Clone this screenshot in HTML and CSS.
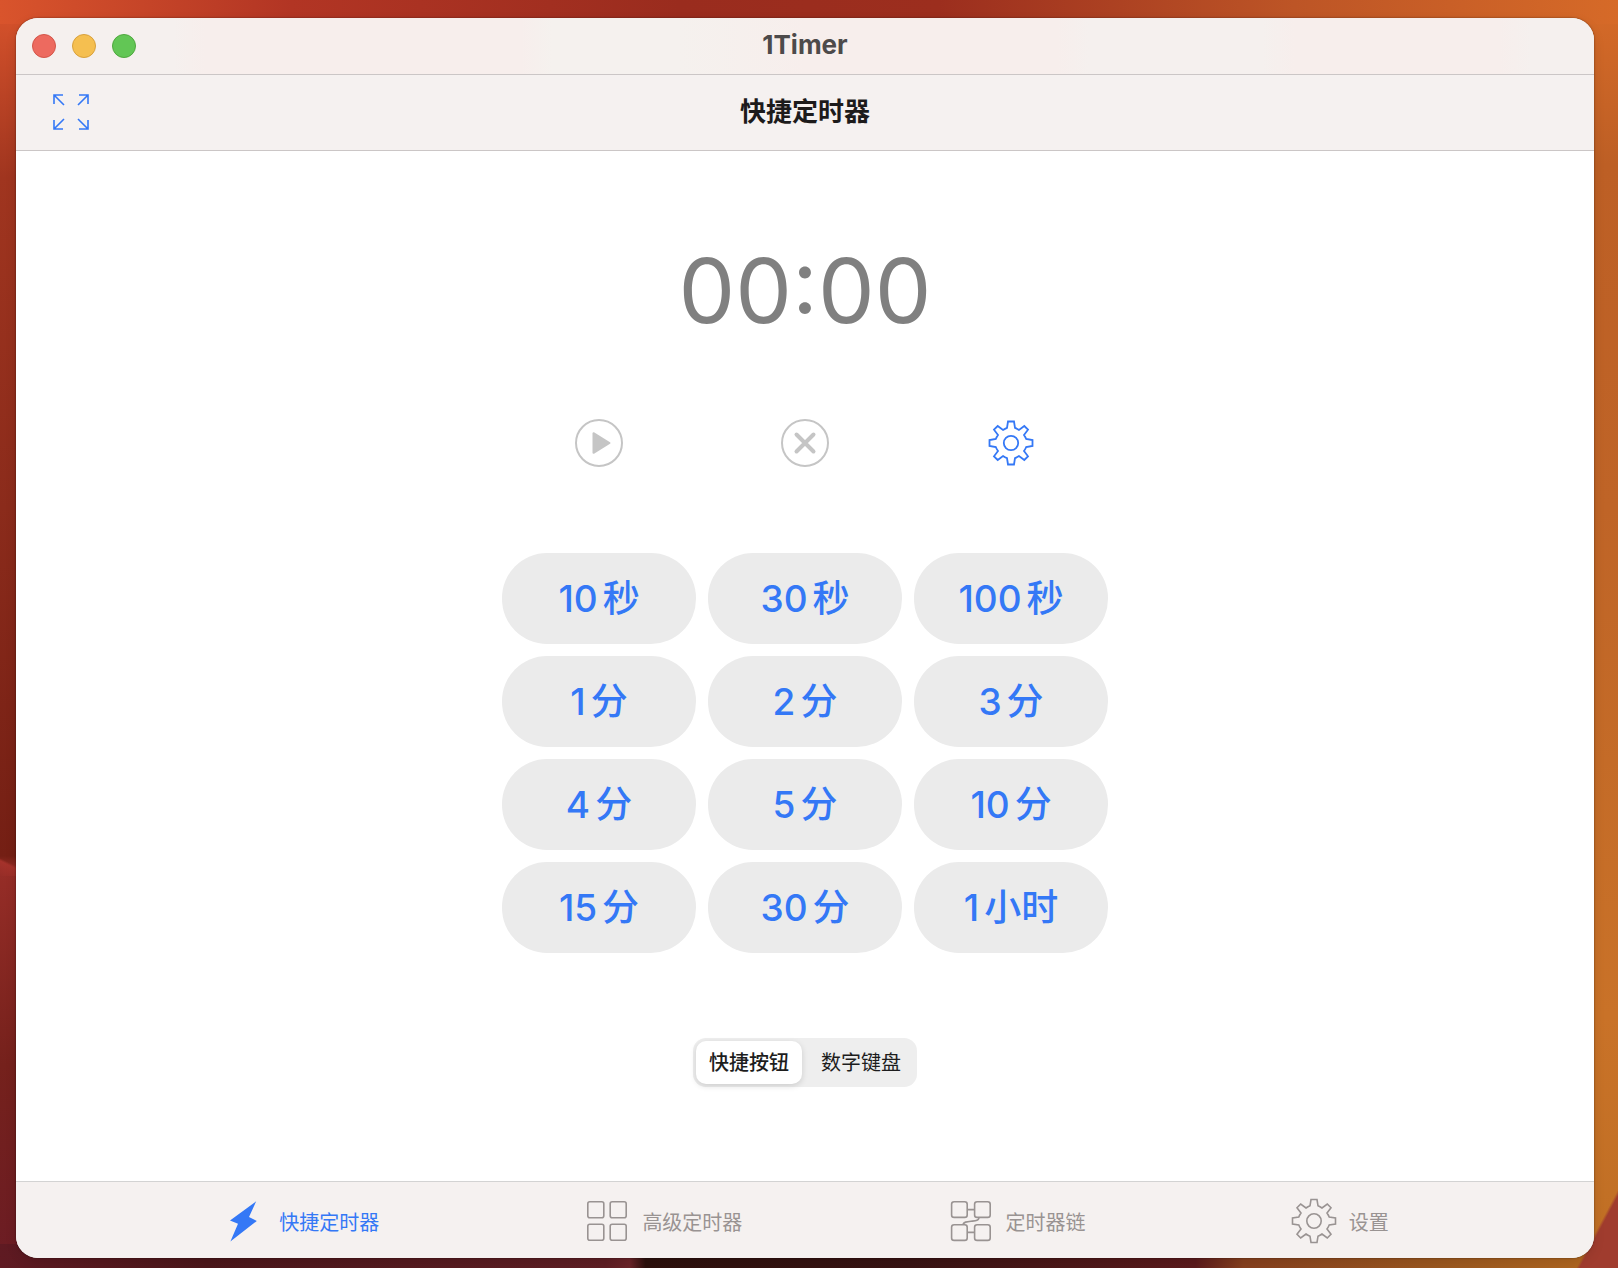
FILE: index.html
```html
<!DOCTYPE html>
<html lang="zh-CN">
<head>
  <meta charset="UTF-8">
  <meta name="viewport" content="width=device-width, initial-scale=1.0">
  <title>1Timer</title>
  <link rel="stylesheet" href="styles.css">
</head>
<body>
  <svg class="sprite" aria-hidden="true">
    <symbol id="gear" viewBox="-23 -23 46 46">
      <path d="M-3-21.5H3L4-15.2Q6-14.4 8-13L13.3-17L17-13.3L13-8Q14.4-6 15.2-4L21.5-3V3L15.2 4Q14.4 6 13 8L17 13.3L13.3 17L8 13Q6 14.4 4 15.2L3 21.5H-3L-4 15.2Q-6 14.4-8 13L-13.3 17L-17 13.3L-13 8Q-14.4 6-15.2 4L-21.5 3V-3L-15.2-4Q-14.4-6-13-8L-17-13.3L-13.3-17L-8-13Q-6-14.4-4-15.2Z"/>
      <circle r="7.2"/>
    </symbol>
  </svg>

  <div class="window">
    <header class="titlebar">
      <div class="lights">
        <button class="light red" aria-label="关闭"></button>
        <button class="light yellow" aria-label="最小化"></button>
        <button class="light green" aria-label="缩放"></button>
      </div>
      <span class="app-name">1Timer</span>
    </header>

    <div class="toolbar">
      <button class="icon-btn" aria-label="全屏">
        <svg class="expand" viewBox="0 0 36 36">
          <path d="M1 10V1H10M1 1L11 11M26 1H35V10M35 1L25 11M1 26V35H10M1 35L11 25M26 35H35V26M35 35L25 25"/>
        </svg>
      </button>
      <h1>快捷定时器</h1>
    </div>

    <main>
      <div class="time">00:00</div>

      <div class="controls">
        <button class="icon-btn" aria-label="开始" disabled>
          <svg class="icon muted" viewBox="-24 -24 48 48">
            <circle r="23"/>
            <path class="solid" d="M-5.5-9.8V9.8L10.5 0Z"/>
          </svg>
        </button>
        <button class="icon-btn" aria-label="取消" disabled>
          <svg class="icon muted" viewBox="-24 -24 48 48">
            <circle r="23"/>
            <path class="cross" d="M-8.5-8.5L8.5 8.5M8.5-8.5L-8.5 8.5"/>
          </svg>
        </button>
        <button class="icon-btn" aria-label="定时器设置">
          <svg class="gear"><use href="#gear"/></svg>
        </button>
      </div>

      <div class="presets">
        <button><span>10</span><span>秒</span></button>
        <button><span>30</span><span>秒</span></button>
        <button><span>100</span><span>秒</span></button>
        <button><span>1</span><span>分</span></button>
        <button><span>2</span><span>分</span></button>
        <button><span>3</span><span>分</span></button>
        <button><span>4</span><span>分</span></button>
        <button><span>5</span><span>分</span></button>
        <button><span>10</span><span>分</span></button>
        <button><span>15</span><span>分</span></button>
        <button><span>30</span><span>分</span></button>
        <button><span>1</span><span>小时</span></button>
      </div>

      <div class="segmented">
        <input type="radio" name="mode" id="mode-quick" checked>
        <label for="mode-quick">快捷按钮</label>
        <input type="radio" name="mode" id="mode-keypad">
        <label for="mode-keypad">数字键盘</label>
      </div>
    </main>

    <nav class="tabbar">
      <a class="tab active" href="#quick">
        <svg viewBox="-23 -23 46 46"><path class="bolt" d="M12.2-19.7L-14-.5L-6 2.7L-13.6 20.4L12.8 0L5-4Z"/></svg>
        <span>快捷定时器</span>
      </a>
      <a class="tab" href="#advanced">
        <svg viewBox="-23 -23 46 46">
          <rect x="-19.2" y="-19.2" width="16" height="16" rx="2"/>
          <rect x="3.2" y="-19.2" width="16" height="16" rx="2"/>
          <rect x="-19.2" y="3.2" width="16" height="16" rx="2"/>
          <rect x="3.2" y="3.2" width="16" height="16" rx="2"/>
        </svg>
        <span>高级定时器</span>
      </a>
      <a class="tab" href="#chain">
        <svg viewBox="-23 -23 46 46">
          <rect x="-19.4" y="-19.2" width="15.6" height="15.6" rx="2.5"/>
          <rect x="3.6" y="-19.2" width="15.6" height="15.6" rx="2.5"/>
          <rect x="-19.4" y="3.8" width="15.6" height="15.6" rx="2.5"/>
          <rect x="3.6" y="3.8" width="15.6" height="15.6" rx="2.5"/>
          <path d="M-3.8-11.4H3.6M-3.8 11.4H3.6M8.2-3.6C7.5 0 4.5-.2 0 .2C-4.5.6-7.4 1-8.2 3.8"/>
        </svg>
        <span>定时器链</span>
      </a>
      <a class="tab" href="#settings">
        <svg><use href="#gear"/></svg>
        <span>设置</span>
      </a>
    </nav>
  </div>
</body>
</html>
```

FILE: styles.css
```css
* {
  box-sizing: border-box;
}
body {
  margin: 0;
  min-height: 100vh;
  padding: 18px 24px 10px 16px;
  display: flex;
  font-family: Inter, "Noto Sans CJK SC", sans-serif;
  background:
    linear-gradient(118deg, transparent 50%, #a03c2e 54%) right bottom / 42px 78px no-repeat,
    linear-gradient(207deg, transparent 50%, #a5322b 58%, #962d27) left 848px / 16px 28px no-repeat,
    linear-gradient(90deg, #5f1a22, #4b161a 13%, #5e1e24 38%, #6b2429 39.5%, #2c100c 40.5%, #381313 57%, #5b1a1c 75%, #86401e 78%, #9a571f 90%, #b0661f) left bottom / calc(100% - 24px) 24px no-repeat,
    linear-gradient(90deg, #d9542c, #b23524 18%, #9a2c1e 42%, #9c2e1e 58%, #bd5526 80%, #d66a28) left top / 100% 24px no-repeat,
    linear-gradient(180deg, #d9542c, #a0351f 14%, #8b2b1b 40%, #741f14 67.5%, #962d27 68.5%, #75211c 84%, #6b1c24) left top / 40px 100% no-repeat,
    linear-gradient(180deg, #d66a28, #bd5f25 13%, #bf6427 40%, #c97228 80%, #bf6f24) right top / 50px 100% no-repeat,
    #7a2a1c;
}
.sprite {
  display: none;
}
button {
  font: inherit;
  border: none;
  padding: 0;
  background: none;
}
.window {
  flex: 1;
  display: flex;
  flex-direction: column;
  border-radius: 22px;
  overflow: hidden;
  background: #fff;
  box-shadow: 0 0 2px rgba(0, 0, 0, 0.5), 0 4px 12px rgba(0, 0, 0, 0.1);
}

/* title bar */
.titlebar {
  display: grid;
  grid-template-columns: 1fr auto 1fr;
  align-items: center;
  height: 57px;
  padding: 0 16px;
  border-bottom: 1px solid #cbc6c6;
  background: linear-gradient(90deg, #f5f0ee 10%, #f7eeec 12%, #f7eeec 32%, #f5f1ee 34%, #f5f1ee 42%, #f7eeec 50%, #f7eeec 66%, #f5f0ee 68%, #f5f0ee 79%, #f7eeec 81%, #f7eeec 94%, #f5f0ee 96%);
}
.lights {
  display: flex;
  gap: 16px;
}
.light {
  width: 24px;
  height: 24px;
  border-radius: 50%;
  border: 1px solid #d35549;
  background: #ed6a5f;
}
.yellow {
  border-color: #d8a03c;
  background: #f5bf50;
}
.green {
  border-color: #4fa73e;
  background: #62c655;
}
.app-name {
  font-size: 26px;
  line-height: 32px;
  font-weight: 700;
  color: #4d4a4a;
  padding-bottom: 2px;
}

/* toolbar */
.toolbar {
  display: grid;
  grid-template-columns: 1fr auto 1fr;
  align-items: center;
  height: 76px;
  padding: 0 37px 1px;
  border-bottom: 1px solid #cbc6c6;
  background: #f5f1f0;
}
.toolbar h1 {
  margin: 0;
  font-size: 26px;
  line-height: 36px;
  font-weight: 700;
  color: #1d1b1b;
}
.icon-btn {
  display: flex;
  justify-self: start;
  color: #3478f6;
}
svg {
  display: block;
  fill: none;
  stroke: currentColor;
}
.solid {
  fill: currentColor;
  stroke-linejoin: round;
}
.bolt {
  fill: currentColor;
  stroke: none;
}
.expand {
  width: 36px;
  height: 36px;
  stroke-width: 1.6;
}

/* timer */
main {
  flex: 1;
  display: flex;
  flex-direction: column;
  align-items: center;
  padding-top: 84px;
}
.time {
  font-size: 90px;
  line-height: 112px;
  color: #808080;
}
.controls {
  display: grid;
  grid-template-columns: repeat(3, 194px);
  gap: 12px;
  justify-items: center;
  align-items: center;
  margin-top: 72px;
}
.controls .icon-btn {
  justify-self: center;
}
.icon {
  width: 48px;
  height: 48px;
  stroke-width: 2;
}
.muted {
  color: #c5c5c5;
}
.cross {
  stroke-width: 4;
  stroke-linecap: round;
}
.gear {
  width: 46px;
  height: 46px;
  stroke-width: 1.8;
}
.presets {
  display: grid;
  grid-template-columns: repeat(3, 194px);
  gap: 12px;
  margin-top: 86px;
}
.presets button {
  display: flex;
  justify-content: center;
  align-items: center;
  gap: 5px;
  height: 91px;
  border-radius: 45px;
  background: #ebebeb;
  color: #3478f6;
  font-size: 37px;
  line-height: 48px;
  font-weight: 450;
}
.segmented {
  display: flex;
  gap: 6px;
  margin-top: 85px;
  padding: 3px;
  border-radius: 13px;
  background: #eee;
}
.segmented input {
  position: absolute;
  opacity: 0;
}
.segmented label {
  padding: 2px 13px 0;
  border-radius: 10px;
  font-size: 20px;
  line-height: 41px;
  color: #1d1d1d;
}
.segmented input:checked + label {
  background: #fff;
  font-weight: 500;
  box-shadow: 0 2px 6px rgba(0, 0, 0, 0.14);
}

/* tab bar */
.tabbar {
  display: flex;
  justify-content: space-evenly;
  align-items: center;
  height: 77px;
  padding-top: 2px;
  border-top: 1px solid #d3d3d3;
  background: #f5f1f0;
}
.tab {
  display: flex;
  align-items: center;
  gap: 12px;
  color: #999392;
  font-size: 20px;
  line-height: 30px;
  text-decoration: none;
}
.tab svg {
  width: 46px;
  height: 46px;
  stroke-width: 1.6;
}
.tab span {
  padding-top: 4px;
}
.active {
  color: #3478f6;
}
```
